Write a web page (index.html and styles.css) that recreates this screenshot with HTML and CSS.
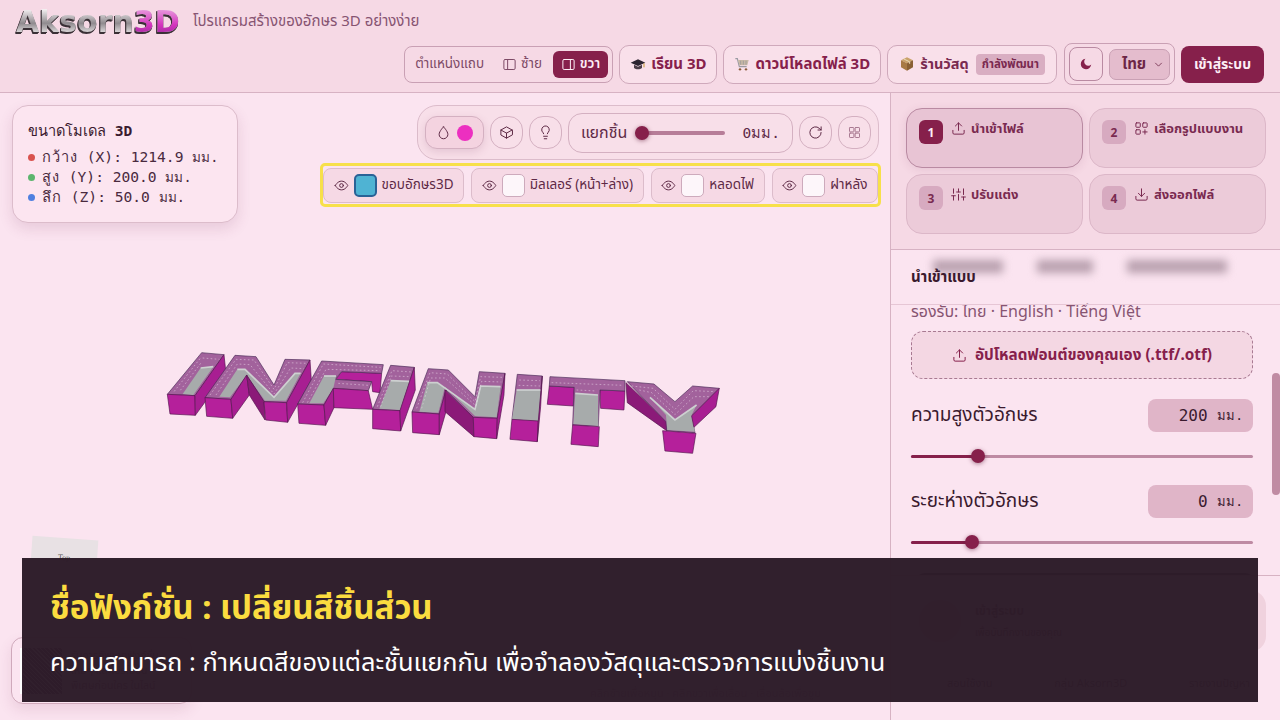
FILE: index.html
```html
<!DOCTYPE html>
<html lang="th">
<head>
    <meta charset="UTF-8">
    <meta name="viewport" content="width=device-width, initial-scale=1.0">
    <title>Aksorn3D</title>
    <link rel="stylesheet" href="styles.css">
</head>
<body>
    <svg class="icon-defs" width="0" height="0">
        <symbol id="i-eye" viewBox="0 0 24 24"><path d="M2 12s3.500-7 10-7 10 7 10 7-3.500 7-10 7-10-7-10-7z"/><circle cx="12" cy="12" r="3"/></symbol>
        <symbol id="i-upload" viewBox="0 0 24 24"><path d="M21 15v4a2 2 0 0 1-2 2H5a2 2 0 0 1-2-2v-4M17 8l-5-5-5 5M12 3v12"/></symbol>
        <symbol id="i-panel" viewBox="0 0 24 24"><rect x="3" y="4" width="18" height="16" rx="2"/><path d="M9 4v16"/></symbol>
        <symbol id="i-panel-r" viewBox="0 0 24 24"><rect x="3" y="4" width="18" height="16" rx="2"/><path d="M15 4v16"/></symbol>
    </svg>

    <header class="topbar">
        <div class="brand-row">
            <span class="logo">Aksorn<b>3D</b></span>
            <span class="tagline">โปรแกรมสร้างของอักษร 3D อย่างง่าย</span>
        </div>
        <div class="action-row">
            <div class="side-switch">
                <span class="side-label">ตำแหน่งแถบ</span>
                <span class="side-opt"><svg class="ico"><use href="#i-panel"/></svg>ซ้าย</span>
                <span class="side-opt active"><svg class="ico"><use href="#i-panel-r"/></svg>ขวา</span>
            </div>
            <a class="nav-btn">
                <svg class="emoji" viewBox="0 0 24 24"><path d="M12 5 1 10l11 5 11-5z" fill="#2b2430"/><path d="M6 13v5c3 2.500 9 2.500 12 0v-5l-6 3z" fill="#4a3d48"/><path d="M21 11v6" stroke="#c99a2e" stroke-width="1.500"/></svg>
                เรียน 3D
            </a>
            <a class="nav-btn">
                <svg class="emoji" viewBox="0 0 24 24"><path d="M2 4h3l3 12h11" fill="none" stroke="#9a9aa2" stroke-width="1.800"/><path d="M6 6h16l-2 8H8z" fill="#c8b9a6"/><path d="M10 7v6M14 7v6M18 7v6" stroke="#8f8f96"/><circle cx="9" cy="20" r="1.800" fill="#8a5a3a"/><circle cx="18" cy="20" r="1.800" fill="#8a5a3a"/></svg>
                ดาวน์โหลดไฟล์ 3D
            </a>
            <a class="nav-btn shop">
                <svg class="emoji" viewBox="0 0 24 24"><path d="M12 2 3 6.500 12 11l9-4.500z" fill="#c9a26a"/><path d="M3 6.500V17l9 5V11z" fill="#a87a45"/><path d="M21 6.500V17l-9 5V11z" fill="#8a6034"/><path d="m7 4.300 9 4.500v3" fill="none" stroke="#eadbb8" stroke-width="1.500"/></svg>
                ร้านวัสดุ
                <span class="soon">กำลังพัฒนา</span>
            </a>
            <div class="pref-box">
                <span class="theme-btn">
                    <svg viewBox="0 0 24 24" class="moon"><path d="M21 13A9 9 0 1 1 11 3a7 7 0 0 0 10 10z"/></svg>
                </span>
                <span class="lang-select">ไทย
                    <svg class="chev" viewBox="0 0 24 24"><path d="m6 9 6 6 6-6"/></svg>
                </span>
            </div>
            <a class="login-btn">เข้าสู่ระบบ</a>
        </div>
    </header>

    <main class="workspace">
        <section class="viewport">
            <!-- extruded model faces, points traced at 3x from the left end of the model -->
            <svg class="model" width="890" height="627" viewBox="0 0 890 627">
                <g transform="translate(150 247) scale(.3333)">
                    <!-- I -->
                    <polygon class="f-top" points="155,38 222,44 135,167 52,163"/>
                    <polygon class="f-gray" points="152,84 190,80 130,165 98,162"/>
                    <polyline class="f-light" points="152,84 190,80"/>
                    <polygon class="f-front" points="52,163 135,167 136,226 60,222"/>
                    <polygon class="f-side" points="135,167 222,44 228,100 136,226"/>
                    <polyline class="f-dash" points="158,54 208,58"/>
                    <polyline class="f-dash" points="150,56 72,155"/>
                    <polyline class="f-dash" points="152,70 88,155"/>
                    <!-- N -->
                    <polygon class="f-top" points="255,46 318,50 372,135 405,58 480,60 410,188 342,185 290,105 243,178 165,173"/>
                    <polygon class="f-gray" points="262,88 285,88 372,172 435,100 452,100 408,182 345,182 290,105 240,172 208,170"/>
                    <polyline class="f-light" points="262,88 285,88 372,172 435,100 452,100"/>
                    <polygon class="f-front" points="165,173 243,178 248,235 170,229"/>
                    <polygon class="f-side" points="243,178 290,105 298,165 248,235"/>
                    <polygon class="f-dark" points="290,105 342,185 345,240 298,165"/>
                    <polygon class="f-front" points="342,185 410,188 413,247 347,240"/>
                    <polygon class="f-side" points="410,188 480,60 484,120 413,247"/>
                    <polyline class="f-dash" points="180,165 258,58 312,60 372,148 412,68 472,70"/>
                    <polyline class="f-dash" points="198,165 262,72 300,74 372,162 422,84 462,86"/>
                    <!-- F -->
                    <polygon class="f-front" points="575,95 695,100 690,158 668,155 665,125 558,118"/>
                    <polygon class="f-top" points="515,63 700,74 695,100 575,95 555,118 665,125 655,152 550,145 522,195 443,192"/>
                    <polygon class="f-gray" points="522,108 558,108 556,118 550,145 520,190 478,190"/>
                    <polyline class="f-light" points="522,108 558,108"/>
                    <polygon class="f-front" points="443,192 522,195 527,256 447,250"/>
                    <polygon class="f-side" points="522,195 550,145 552,203 527,256"/>
                    <polygon class="f-front" points="550,145 655,152 668,208 552,203"/>
                    <polyline class="f-dash" points="458,188 520,72 692,82"/>
                    <polyline class="f-dash" points="472,188 528,88 690,92"/>
                    <polyline class="f-dash" points="565,130 655,136"/>
                    <!-- I -->
                    <polygon class="f-top" points="722,76 793,82 750,212 668,208"/>
                    <polygon class="f-gray" points="722,122 778,124 750,210 688,206"/>
                    <polyline class="f-light" points="722,122 778,124"/>
                    <polygon class="f-front" points="668,208 750,212 752,273 668,266"/>
                    <polygon class="f-side" points="750,212 793,82 796,150 752,273"/>
                    <polyline class="f-dash" points="682,200 726,92 785,96"/>
                    <polyline class="f-dash" points="692,200 724,108 780,110"/>
                    <!-- N -->
                    <polygon class="f-top" points="835,86 895,90 975,170 988,95 1065,100 1042,235 970,232 888,150 868,222 786,216"/>
                    <polygon class="f-gray" points="832,128 862,128 975,208 992,138 1052,140 1040,232 975,228 885,140 865,218 808,215"/>
                    <polyline class="f-light" points="832,128 862,128 975,208 992,138 1052,140"/>
                    <polygon class="f-front" points="786,216 868,222 868,284 788,278"/>
                    <polygon class="f-side" points="868,222 888,150 888,215 868,284"/>
                    <polygon class="f-dark" points="885,150 970,232 972,290 885,215"/>
                    <polygon class="f-front" points="970,232 1042,235 1040,296 972,290"/>
                    <polygon class="f-side" points="1042,235 1065,100 1062,165 1040,296"/>
                    <polyline class="f-dash" points="800,205 840,98 892,102 975,185 992,110 1056,112"/>
                    <polyline class="f-dash" points="815,205 842,114 885,114 978,198 995,124 1054,126"/>
                    <!-- I -->
                    <polygon class="f-top" points="1102,103 1177,108 1165,243 1086,238"/>
                    <polygon class="f-gray" points="1100,150 1172,150 1165,243 1086,238"/>
                    <polyline class="f-light" points="1100,150 1172,150"/>
                    <polygon class="f-front" points="1086,238 1165,243 1162,305 1080,298"/>
                    <polygon class="f-side" points="1165,243 1177,108 1172,200 1162,305"/>
                    <polyline class="f-dash" points="1108,120 1170,122"/>
                    <polyline class="f-dash" points="1106,136 1170,138"/>
                    <!-- T -->
                    <polygon class="f-front" points="1198,138 1273,142 1270,198 1192,193"/>
                    <polygon class="f-front" points="1350,150 1425,153 1422,210 1352,205"/>
                    <polygon class="f-top" points="1200,110 1425,122 1425,153 1350,150 1345,258 1268,255 1273,142 1198,138"/>
                    <polygon class="f-gray" points="1276,160 1344,165 1345,258 1270,252"/>
                    <polyline class="f-light" points="1276,160 1344,165"/>
                    <polygon class="f-front" points="1268,255 1348,260 1345,320 1263,313"/>
                    <polyline class="f-dash" points="1205,128 1420,136"/>
                    <polyline class="f-dash" points="1280,150 1340,153"/>
                    <!-- Y -->
                    <polygon class="f-dark" points="1428,128 1550,245 1550,272 1432,188"/>
                    <polygon class="f-top" points="1432,125 1512,132 1575,185 1628,138 1708,145 1625,228 1635,278 1550,272 1548,245"/>
                    <polygon class="f-gray" points="1500,172 1575,240 1640,195 1625,225 1635,275 1552,270 1548,225"/>
                    <polyline class="f-light" points="1500,172 1575,240 1640,195"/>
                    <polygon class="f-front" points="1538,272 1638,280 1628,340 1545,333"/>
                    <polygon class="f-side" points="1625,228 1708,145 1698,200 1632,262"/>
                    <polyline class="f-dash" points="1445,138 1510,145 1575,208 1630,152 1695,155"/>
                    <polyline class="f-dash" points="1468,150 1505,158 1575,224 1632,170 1680,170"/>
                </g>
            </svg>

            <aside class="size-card">
                <h3><span class="th">ขนาดโมเดล</span> <b>3D</b></h3>
                <p><i class="dot red"></i><span class="th">กว้าง</span> (X): 1214.9 <small>มม.</small></p>
                <p><i class="dot green"></i><span class="th">สูง</span> (Y): 200.0 <small>มม.</small></p>
                <p><i class="dot blue"></i><span class="th">ลึก</span> (Z): 50.0 <small>มม.</small></p>
            </aside>

            <div class="tool-stack">
                <div class="toolbar">
                    <span class="tool color-tool">
                        <svg class="ico" viewBox="0 0 24 24"><path d="M12 3s7 7 7 12a7 7 0 0 1-14 0c0-5 7-12 7-12z"/></svg>
                        <i class="swatch-dot"></i>
                    </span>
                    <span class="tool round">
                        <svg class="ico" viewBox="0 0 24 24"><path d="M21 8 12 3 3 8v8l9 5 9-5z"/><path d="m3 8 9 5 9-5M12 13v8"/></svg>
                    </span>
                    <span class="tool round">
                        <svg class="ico" viewBox="0 0 24 24"><path d="M15 14c.2-1 .7-1.700 1.500-2.500A6 6 0 1 0 6 8c0 1.300.5 2.500 1.500 3.500.8.800 1.300 1.500 1.500 2.500M9 18h6M10 22h4"/></svg>
                    </span>
                    <span class="tool explode">
                        <span>แยกชิ้น</span>
                        <span class="mini-slider"><i></i></span>
                        <span class="explode-val">0มม.</span>
                    </span>
                    <span class="tool round">
                        <svg class="ico" viewBox="0 0 24 24"><path d="M21 12a9 9 0 1 1-3-6.700L21 8M21 3v5h-5"/></svg>
                    </span>
                    <span class="tool round muted">
                        <svg class="ico" viewBox="0 0 24 24"><rect x="4" y="4" width="7" height="7" rx="1"/><rect x="13" y="4" width="7" height="7" rx="1"/><rect x="4" y="13" width="7" height="7" rx="1"/><rect x="13" y="13" width="7" height="7" rx="1"/></svg>
                    </span>
                </div>
                <div class="part-legend">
                    <span class="part"><svg class="ico"><use href="#i-eye"/></svg><i class="swatch blue-sw"></i>ขอบอักษร3D</span>
                    <span class="part"><svg class="ico"><use href="#i-eye"/></svg><i class="swatch"></i>มิลเลอร์ (หน้า+ล่าง)</span>
                    <span class="part"><svg class="ico"><use href="#i-eye"/></svg><i class="swatch"></i>หลอดไฟ</span>
                    <span class="part"><svg class="ico"><use href="#i-eye"/></svg><i class="swatch"></i>ฝาหลัง</span>
                </div>
            </div>

            <div class="view-cube">Top</div>

            <div class="promo-card">
                <span class="qr"></span>
                <span class="promo-text">รับการอัพเดทฟังก์ชั่น<br>ใหม่ๆ และโปรโมชั่น<br>พิเศษก่อนใคร ในไลน์</span>
            </div>
            <span class="view-hint">คลิกซ้ายเพื่อหมุน · คลิกขวาเพื่อเลื่อน · เลื่อนล้อเพื่อซูม</span>
        </section>

        <aside class="sidebar">
            <div class="steps">
                <div class="step current"><span class="step-no">1</span><svg class="ico"><use href="#i-upload"/></svg><span>นำเข้าไฟล์</span></div>
                <div class="step"><span class="step-no">2</span>
                    <svg class="ico" viewBox="0 0 24 24"><rect x="3" y="3" width="7" height="7" rx="1"/><rect x="14" y="3" width="7" height="7" rx="1"/><rect x="3" y="14" width="7" height="7" rx="1"/><path d="M14 17.500h7M17.500 14v7"/></svg>
                    <span>เลือกรูปแบบงาน</span></div>
                <div class="step"><span class="step-no">3</span>
                    <svg class="ico" viewBox="0 0 24 24"><path d="M4 21v-7M4 10V3M12 21v-9M12 8V3M20 21v-5M20 12V3M1 14h6M9 8h6M17 16h6"/></svg>
                    <span>ปรับแต่ง</span></div>
                <div class="step"><span class="step-no">4</span>
                    <svg class="ico" viewBox="0 0 24 24"><path d="M21 15v4a2 2 0 0 1-2 2H5a2 2 0 0 1-2-2v-4M7 10l5 5 5-5M12 15V3"/></svg>
                    <span>ส่งออกไฟล์</span></div>
            </div>

            <div class="panel">
                <div class="panel-head">
                    <div class="blur-tabs"><i></i><i></i><i></i></div>
                    <h4>นำเข้าแบบ</h4>
                </div>
                <p class="support">รองรับ: ไทย · English · Tiếng Việt</p>
                <div class="upload-box"><svg class="ico"><use href="#i-upload"/></svg>อัปโหลดฟอนต์ของคุณเอง (.ttf/.otf)</div>

                <div class="field">
                    <label>ความสูงตัวอักษร</label>
                    <span class="num-box">200 <small>มม.</small></span>
                </div>
                <div class="range"><i class="fill" style="width: 67px"></i><i class="knob" style="left: 60px"></i></div>

                <div class="field">
                    <label>ระยะห่างตัวอักษร</label>
                    <span class="num-box">0 <small>มม.</small></span>
                </div>
                <div class="range"><i class="fill" style="width: 61px"></i><i class="knob" style="left: 54px"></i></div>
                <div class="gen-btn"></div>
            </div>

            <div class="account">
                <div class="login-card">
                    <span class="avatar"></span>
                    <span class="login-text"><b>เข้าสู่ระบบ</b><small>เพื่อบันทึกงานของคุณ</small></span>
                </div>
                <div class="foot-links"><span>สอนใช้งาน</span><span>กลุ่ม Aksorn3D</span><span>รายงานปัญหา</span></div>
            </div>
            <i class="scrollbar"></i>
        </aside>
    </main>

    <div class="caption">
        <h2>ชื่อฟังก์ชั่น : เปลี่ยนสีชิ้นส่วน</h2>
        <p>ความสามารถ : กำหนดสีของแต่ละชั้นแยกกัน เพื่อจำลองวัสดุและตรวจการแบ่งชิ้นงาน</p>
    </div>
</body>
</html>
```

FILE: styles.css
```css
* {
  margin: 0;
  padding: 0;
  box-sizing: border-box;
}

html,
body {
  width: 1280px;
  height: 720px;
  overflow: hidden;
}

body {
  font-family: "Noto Sans", "Noto Sans Thai", "Open Sans", sans-serif;
  background-color: #fbe4f0;
  color: #3a1a2e;
  font-size: 14px;
  position: relative;
}

.icon-defs {
  position: absolute;
}

.ico {
  width: 15px;
  height: 15px;
  fill: none;
  stroke: currentColor;
  stroke-width: 1.6;
  stroke-linecap: round;
  stroke-linejoin: round;
  flex: none;
}

/* header */
.topbar {
  height: 93px;
  background-color: #f6d9e5;
  border-bottom: 1px solid #d7b2c3;
  padding: 0 16px;
}

.brand-row {
  height: 43px;
  display: flex;
  align-items: center;
  gap: 12px;
}

.logo {
  font-family: "DejaVu Sans", sans-serif;
  font-size: 30px;
  font-weight: 700;
  letter-spacing: 0;
  width: 165px;
  white-space: nowrap;
  background: linear-gradient(180deg, #f4f0f2 15%, #8f8a8e 55%, #d8d4d6 80%);
  -webkit-background-clip: text;
  background-clip: text;
  color: transparent;
  filter: drop-shadow(-1px 1px 0 #3a3036) drop-shadow(0 1px 0 #3a3036);
  margin-top: -1px;
}

.logo b {
  background: linear-gradient(180deg, #e9a5e0 10%, #d433bd 60%, #8e2a94 100%);
  -webkit-background-clip: text;
  background-clip: text;
  color: transparent;
}

.tagline {
  color: #875472;
  font-size: 15px;
}

.action-row {
  display: flex;
  justify-content: flex-end;
  align-items: center;
  gap: 6px;
  height: 42px;
}

.side-switch {
  width: 209px;
  height: 37px;
  border: 1px solid #c9a0b4;
  border-radius: 8px;
  display: flex;
  align-items: center;
  padding: 0 4px 0 10px;
  color: #7d4a66;
  font-size: 13.5px;
}

.side-label {
  margin-right: 18px;
}

.side-opt {
  display: flex;
  align-items: center;
  gap: 4px;
  height: 27px;
}

.side-opt.active {
  background-color: #86204b;
  color: #fdeef5;
  border-radius: 6px;
  padding: 0 8px;
  margin-left: auto;
  font-weight: 600;
}

.nav-btn {
  height: 39px;
  padding: 0 10px;
  display: flex;
  align-items: center;
  gap: 5px;
  border: 1px solid #cfa9bb;
  border-radius: 10px;
  color: #86204b;
  font-weight: 700;
  font-size: 15px;
  white-space: nowrap;
  background-color: #f9e0ea;
}

.emoji {
  width: 16px;
  height: 16px;
  flex: none;
}

.shop {
  color: #7a2a50;
  font-size: 14.5px;
  padding: 0 11px;
}

.soon {
  background-color: #d9aec2;
  font-size: 11.5px;
  padding: 2px 6px;
  border-radius: 4px;
  margin-left: 2px;
}

.pref-box {
  width: 111px;
  height: 42px;
  border: 1px solid #c9a0b4;
  border-radius: 8px;
  display: flex;
  align-items: center;
  padding: 0 4px;
  gap: 6px;
  margin-left: 1px;
}

.theme-btn {
  width: 34px;
  height: 34px;
  border: 1px solid #b98aa2;
  border-radius: 8px;
  display: flex;
  align-items: center;
  justify-content: center;
}

.moon {
  width: 14px;
  height: 14px;
  fill: #86204b;
}

.lang-select {
  flex: 1;
  height: 31px;
  background-color: #e4bccd;
  border: 1px solid #c9a0b4;
  border-radius: 7px;
  display: flex;
  align-items: center;
  justify-content: space-between;
  padding: 0 4px 0 12px;
  font-weight: 700;
  font-size: 15px;
  color: #6d2646;
}

.chev {
  width: 13px;
  height: 13px;
  fill: none;
  stroke: #6d2646;
  stroke-width: 1.5;
}

.login-btn {
  width: 83px;
  height: 37px;
  background-color: #86204b;
  color: #fdeef5;
  border-radius: 8px;
  font-weight: 700;
  font-size: 14px;
  display: flex;
  align-items: center;
  justify-content: center;
}

/* main area */
.workspace {
  display: flex;
  height: 627px;
}

.viewport {
  width: 890px;
  position: relative;
  overflow: hidden;
}

.model {
  position: absolute;
  left: 0;
  top: 0;
}

.f-top {
  fill: #a2629c;
  stroke: #4a2a58;
  stroke-width: 2;
  stroke-linejoin: round;
}

.f-gray {
  fill: #a7abab;
}

.f-light {
  fill: none;
  stroke: #cdd0d0;
  stroke-width: 5;
}

.f-front {
  fill: #b5209b;
  stroke: #55154f;
  stroke-width: 2;
  stroke-linejoin: round;
}

.f-side {
  fill: #a81e92;
  stroke: #55154f;
  stroke-width: 2;
  stroke-linejoin: round;
}

.f-dark {
  fill: #8b1a78;
  stroke: #55154f;
  stroke-width: 2;
  stroke-linejoin: round;
}

.f-dash {
  fill: none;
  stroke: #eedcec;
  stroke-width: 2;
  stroke-dasharray: 5 7;
  opacity: 0.75;
}

.size-card {
  position: absolute;
  left: 12px;
  top: 12px;
  width: 226px;
  height: 118px;
  padding: 15px 15px;
  background-color: #fce5f0;
  border: 1px solid #dcbccb;
  border-radius: 16px;
  box-shadow: 0 6px 14px rgba(120, 50, 90, 0.14);
  font-family: "DejaVu Sans Mono", "Liberation Mono", monospace;
  font-size: 14.6px;
  line-height: 20px;
  color: #4a2a3e;
}

.size-card h3 {
  font-size: 14.6px;
  font-weight: 400;
  margin-bottom: 6px;
  color: #3a1a2e;
}

.size-card p {
  display: flex;
  align-items: center;
  white-space: pre;
}

.th {
  letter-spacing: 1px;
}

.size-card h3 .th {
  letter-spacing: 0;
}

.size-card small {
  font-size: 13.5px;
}

.dot {
  width: 7px;
  height: 7px;
  border-radius: 50%;
  margin-right: 7px;
  flex: none;
}

.red {
  background-color: #d9534f;
}

.green {
  background-color: #5cb56e;
}

.blue {
  background-color: #4f80e0;
}

.tool-stack {
  position: absolute;
  top: 12px;
  right: 9px;
  display: flex;
  flex-direction: column;
  align-items: flex-end;
  gap: 3px;
}

.toolbar {
  width: 462px;
  height: 55px;
  margin-right: 2px;
  display: flex;
  align-items: center;
  gap: 6px;
  padding: 0 7px;
  border: 1px solid #dcbccb;
  border-radius: 20px;
  background-color: #f8dfe9;
}

.tool {
  height: 33px;
  display: flex;
  align-items: center;
  justify-content: center;
  border: 1px solid #d4b0c1;
  border-radius: 12px;
  color: #5e2a46;
  flex: none;
}

.round {
  width: 33px;
  border-radius: 14px;
}

.muted {
  color: #a97a92;
}

.color-tool {
  width: 59px;
  gap: 6px;
  background-color: #f4d3e0;
  box-shadow: 0 3px 8px rgba(120, 50, 90, 0.15);
}

.swatch-dot {
  width: 16px;
  height: 16px;
  border-radius: 50%;
  background-color: #ec2fc0;
}

.explode {
  width: 225px;
  height: 40px;
  border-radius: 14px;
  padding: 0 12px;
  gap: 8px;
  font-size: 16px;
  justify-content: flex-start;
}

.mini-slider {
  width: 90px;
  height: 4px;
  background-color: #b77d98;
  border-radius: 2px;
  position: relative;
}

.mini-slider i {
  position: absolute;
  left: 0;
  top: -5px;
  width: 14px;
  height: 14px;
  border-radius: 50%;
  background-color: #86204b;
  box-shadow: 0 1px 4px rgba(90, 20, 50, 0.5);
}

.explode-val {
  margin-left: auto;
  font-family: "DejaVu Sans Mono", monospace;
  font-size: 14.5px;
}

.part-legend {
  width: 561px;
  height: 44px;
  border: 3px solid #f7e04a;
  border-radius: 5px;
  display: flex;
  align-items: center;
  gap: 7px;
  padding: 0;
}

.part {
  height: 35px;
  flex: 1 1 auto;
  display: flex;
  align-items: center;
  justify-content: center;
  gap: 5px;
  padding: 0 8px;
  background-color: #f6d9e5;
  border: 1px solid #dcbccb;
  border-radius: 8px;
  font-size: 13.5px;
  color: #5e2a46;
  white-space: nowrap;
}

.swatch {
  width: 23px;
  height: 23px;
  border-radius: 5px;
  background-color: #fdf6fa;
  border: 1px solid #cdaabc;
  flex: none;
}

.blue-sw {
  background-color: #4fb3d3;
  border: 2px solid #2a6296;
}

.view-cube {
  position: absolute;
  left: 30px;
  top: 445px;
  width: 66px;
  height: 70px;
  background-color: #e8e1e4;
  transform: rotate(4deg);
  font-family: "Liberation Serif", serif;
  font-size: 8px;
  text-align: center;
  padding-top: 15px;
  color: #555;
}

.promo-card {
  position: absolute;
  left: 11px;
  top: 544px;
  width: 181px;
  height: 67px;
  border: 1px solid #cfa9bb;
  border-radius: 12px;
  display: flex;
  align-items: center;
  gap: 9px;
  padding: 0 8px;
  box-shadow: 0 6px 14px rgba(120, 50, 90, 0.12);
  font-size: 10.5px;
  line-height: 15px;
  color: #5e2a46;
}

.qr {
  width: 42px;
  height: 46px;
  border-left: 3px solid #fff;
  background-color: #fff;
  background-image: repeating-linear-gradient(45deg, #3a2a34 0 2px, #fff 2px 3px);
  flex: none;
}

.view-hint {
  position: absolute;
  left: 590px;
  top: 592px;
  font-size: 11px;
  color: #a07f90;
  white-space: nowrap;
}

/* sidebar */
.sidebar {
  width: 390px;
  border-left: 1px solid #d7b2c3;
  position: relative;
  overflow: hidden;
  display: flex;
  flex-direction: column;
}

.steps {
  height: 157px;
  padding: 15px 15px 0;
  display: grid;
  grid-template-columns: 177px 177px;
  grid-auto-rows: 60px;
  gap: 6px;
  background-color: #f6d9e5;
  border-bottom: 1px solid #d7b2c3;
  flex: none;
}

.step {
  display: flex;
  align-items: flex-start;
  gap: 5px;
  padding: 10px 12px;
  background-color: #eccbd9;
  border: 1px solid #dcb7c8;
  border-radius: 16px;
  font-size: 13px;
  font-weight: 700;
  color: #7a2a50;
  white-space: nowrap;
}

.step .ico {
  margin-top: 2px;
}

.step.current {
  border-color: #b98aa2;
  background-color: #e8c4d4;
  box-shadow: 0 2px 10px rgba(120, 50, 90, 0.12);
}

.step-no {
  width: 24px;
  height: 24px;
  border-radius: 6px;
  background-color: #d7aac0;
  display: flex;
  align-items: center;
  justify-content: center;
  font-size: 12px;
  margin: 1px 3px 0 0;
  flex: none;
}

.current .step-no {
  background-color: #86204b;
  color: #fdeef5;
}

.panel {
  padding: 0 27px 0 20px;
  height: 325px;
  overflow: hidden;
  flex: none;
}

.panel-head {
  height: 55px;
  margin: 0 -27px 0 -20px;
  padding: 16px 20px 0;
  border-bottom: 1px solid #e6c6d5;
  position: relative;
}

.panel-head h4 {
  font-size: 15px;
  font-weight: 700;
  color: #3a1a2e;
  position: relative;
}

.blur-tabs {
  position: absolute;
  left: 42px;
  top: 10px;
  display: flex;
  gap: 34px;
  filter: blur(4px);
}

.blur-tabs i {
  width: 70px;
  height: 13px;
  background-color: #b8a0ae;
}

.blur-tabs i:nth-child(2) {
  width: 56px;
}

.blur-tabs i:nth-child(3) {
  width: 100px;
}

.support {
  font-size: 16px;
  color: #875472;
  line-height: 14px;
  margin-top: -1px;
}

.upload-box {
  height: 48px;
  margin-top: 13px;
  border: 1px dashed #a87a92;
  border-radius: 12px;
  background-color: #f4d7e3;
  color: #86204b;
  font-weight: 700;
  font-size: 15.3px;
  display: flex;
  align-items: center;
  justify-content: center;
  gap: 8px;
}

.field {
  display: flex;
  justify-content: space-between;
  align-items: center;
  height: 33px;
  margin-top: 20px;
}

.range + .field {
  margin-top: 27px;
}

.field label {
  font-size: 19px;
  color: #3a1a2e;
}

.num-box {
  width: 105px;
  height: 33px;
  background-color: #e0b5c8;
  border-radius: 8px;
  padding-right: 10px;
  display: flex;
  align-items: center;
  justify-content: flex-end;
  white-space: pre;
  font-family: "DejaVu Sans Mono", monospace;
  font-size: 16px;
  color: #3a1a2e;
}

.num-box small {
  font-size: 13px;
}

.range {
  height: 3px;
  margin-top: 23px;
  background-color: #be8aa3;
  border-radius: 2px;
  position: relative;
}

.range .fill {
  position: absolute;
  left: 0;
  top: 0;
  height: 3px;
  background-color: #86204b;
  border-radius: 2px;
}

.range .knob {
  position: absolute;
  top: -6px;
  width: 14px;
  height: 14px;
  border-radius: 50%;
  background-color: #86204b;
  box-shadow: 0 1px 4px rgba(90, 20, 50, 0.5);
}

.gen-btn {
  height: 40px;
  margin: 29px -2px 0 4px;
  background-color: #1d0e19;
  border-radius: 10px;
}

.account {
  flex: 1;
  border-top: 1px solid #d7b2c3;
  padding: 14px 14px 0;
}

.login-card {
  height: 62px;
  display: flex;
  align-items: center;
  gap: 14px;
  padding: 0 14px;
  background-color: #f0d2de;
  border-radius: 16px;
}

.avatar {
  width: 42px;
  height: 42px;
  border-radius: 50%;
  background-color: #d7aac0;
}

.login-text {
  display: flex;
  flex-direction: column;
  gap: 5px;
  font-size: 12px;
}

.foot-links {
  display: flex;
  justify-content: space-between;
  padding: 23px 16px 0 42px;
  font-size: 11px;
}

.scrollbar {
  position: absolute;
  right: 0;
  top: 280px;
  width: 8px;
  height: 122px;
  background-color: #c08ba3;
  border-radius: 4px;
}

/* caption over the page */
.caption {
  position: absolute;
  left: 22px;
  top: 558px;
  width: 1236px;
  height: 144px;
  background-color: rgba(46, 28, 42, 0.985);
  padding: 27px 28px 0;
}

.caption h2 {
  color: #fbdc3f;
  font-size: 33px;
  font-weight: 700;
  line-height: 44px;
}

.caption p {
  color: #fff;
  font-size: 25.4px;
  line-height: 32px;
  margin-top: 16px;
}
```
